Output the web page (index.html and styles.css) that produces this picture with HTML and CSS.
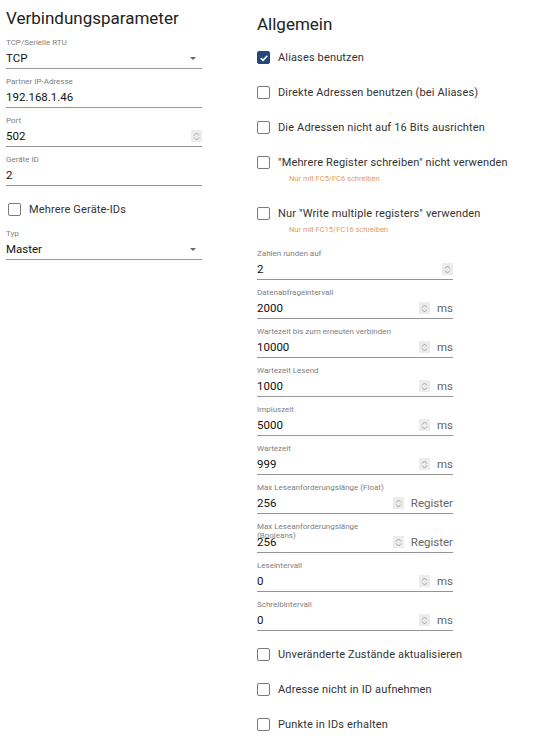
FILE: index.html
```html
<!DOCTYPE html>
<html lang="de">
<head>
    <meta charset="UTF-8">
    <meta name="viewport" content="width=device-width, initial-scale=1.0">
    <title>Modbus Einstellungen</title>
    <link rel="stylesheet" href="styles.css">
</head>
<body>
    <div class="page">
        <div class="column column-left">
            <h2 class="title">Verbindungsparameter</h2>

            <div class="field">
                <div class="label">TCP/Serielle RTU</div>
                <div class="input-row">
                    <span class="value">TCP</span>
                    <span class="arrow"></span>
                </div>
            </div>
            <div class="field">
                <div class="label">Partner IP-Adresse</div>
                <div class="input-row">
                    <span class="value">192.168.1.46</span>
                </div>
            </div>
            <div class="field">
                <div class="label">Port</div>
                <div class="input-row">
                    <span class="value">502</span>
                    <span class="spinner"><svg width="7" height="9" viewBox="0 0 7 9"><path d="M1 3.5 L3.5 1 L6 3.5 M1 5.5 L3.5 8 L6 5.5" fill="none" stroke="#9a9a9a" stroke-width="0.9"/></svg></span>
                </div>
            </div>
            <div class="field">
                <div class="label">Geräte ID</div>
                <div class="input-row">
                    <span class="value">2</span>
                </div>
            </div>

            <label class="check check-left">
                <span class="box"></span>
                <span class="check-text">Mehrere Geräte-IDs</span>
            </label>

            <div class="field">
                <div class="label">Typ</div>
                <div class="input-row">
                    <span class="value">Master</span>
                    <span class="arrow"></span>
                </div>
            </div>
        </div>

        <div class="column column-right">
            <h2 class="title title-right">Allgemein</h2>

            <label class="check">
                <span class="box checked"><svg width="10" height="10" viewBox="0 0 10 10"><path d="M1.8 5.2 L4 7.3 L8.3 2.8" fill="none" stroke="#fff" stroke-width="1.6"/></svg></span>
                <span class="check-text">Aliases benutzen</span>
            </label>
            <label class="check">
                <span class="box"></span>
                <span class="check-text">Direkte Adressen benutzen (bei Aliases)</span>
            </label>
            <label class="check">
                <span class="box"></span>
                <span class="check-text">Die Adressen nicht auf 16 Bits ausrichten</span>
            </label>
            <div class="check-group">
                <label class="check">
                    <span class="box"></span>
                    <span class="check-text">"Mehrere Register schreiben" nicht verwenden</span>
                </label>
                <div class="helper">Nur mit FC5/FC6 schreiben</div>
            </div>
            <div class="check-group">
                <label class="check">
                    <span class="box"></span>
                    <span class="check-text">Nur "Write multiple registers" verwenden</span>
                </label>
                <div class="helper">Nur mit FC15/FC16 schreiben</div>
            </div>

            <div class="field">
                <div class="label">Zahlen runden auf</div>
                <div class="input-row">
                    <span class="value">2</span>
                    <span class="spinner"><svg width="7" height="9" viewBox="0 0 7 9"><path d="M1 3.5 L3.5 1 L6 3.5 M1 5.5 L3.5 8 L6 5.5" fill="none" stroke="#9a9a9a" stroke-width="0.9"/></svg></span>
                </div>
            </div>
            <div class="field">
                <div class="label">Datenabfrageintervall</div>
                <div class="input-row">
                    <span class="value">2000</span>
                    <span class="spinner"><svg width="7" height="9" viewBox="0 0 7 9"><path d="M1 3.5 L3.5 1 L6 3.5 M1 5.5 L3.5 8 L6 5.5" fill="none" stroke="#9a9a9a" stroke-width="0.9"/></svg></span>
                    <span class="unit">ms</span>
                </div>
            </div>
            <div class="field">
                <div class="label">Wartezeit bis zum erneuten verbinden</div>
                <div class="input-row">
                    <span class="value">10000</span>
                    <span class="spinner"><svg width="7" height="9" viewBox="0 0 7 9"><path d="M1 3.5 L3.5 1 L6 3.5 M1 5.5 L3.5 8 L6 5.5" fill="none" stroke="#9a9a9a" stroke-width="0.9"/></svg></span>
                    <span class="unit">ms</span>
                </div>
            </div>
            <div class="field">
                <div class="label">Wartezeit Lesend</div>
                <div class="input-row">
                    <span class="value">1000</span>
                    <span class="spinner"><svg width="7" height="9" viewBox="0 0 7 9"><path d="M1 3.5 L3.5 1 L6 3.5 M1 5.5 L3.5 8 L6 5.5" fill="none" stroke="#9a9a9a" stroke-width="0.9"/></svg></span>
                    <span class="unit">ms</span>
                </div>
            </div>
            <div class="field">
                <div class="label">Impluszeit</div>
                <div class="input-row">
                    <span class="value">5000</span>
                    <span class="spinner"><svg width="7" height="9" viewBox="0 0 7 9"><path d="M1 3.5 L3.5 1 L6 3.5 M1 5.5 L3.5 8 L6 5.5" fill="none" stroke="#9a9a9a" stroke-width="0.9"/></svg></span>
                    <span class="unit">ms</span>
                </div>
            </div>
            <div class="field">
                <div class="label">Wartezeit</div>
                <div class="input-row">
                    <span class="value">999</span>
                    <span class="spinner"><svg width="7" height="9" viewBox="0 0 7 9"><path d="M1 3.5 L3.5 1 L6 3.5 M1 5.5 L3.5 8 L6 5.5" fill="none" stroke="#9a9a9a" stroke-width="0.9"/></svg></span>
                    <span class="unit">ms</span>
                </div>
            </div>
            <div class="field field-register">
                <div class="label">Max Leseanforderungslänge (Float)</div>
                <div class="input-row">
                    <span class="value">256</span>
                    <span class="spinner"><svg width="7" height="9" viewBox="0 0 7 9"><path d="M1 3.5 L3.5 1 L6 3.5 M1 5.5 L3.5 8 L6 5.5" fill="none" stroke="#9a9a9a" stroke-width="0.9"/></svg></span>
                    <span class="unit">Register</span>
                </div>
            </div>
            <div class="field field-register">
                <div class="label">Max Leseanforderungslänge (Booleans)</div>
                <div class="input-row">
                    <span class="value">256</span>
                    <span class="spinner"><svg width="7" height="9" viewBox="0 0 7 9"><path d="M1 3.5 L3.5 1 L6 3.5 M1 5.5 L3.5 8 L6 5.5" fill="none" stroke="#9a9a9a" stroke-width="0.9"/></svg></span>
                    <span class="unit">Register</span>
                </div>
            </div>
            <div class="field">
                <div class="label">Leseintervall</div>
                <div class="input-row">
                    <span class="value">0</span>
                    <span class="spinner"><svg width="7" height="9" viewBox="0 0 7 9"><path d="M1 3.5 L3.5 1 L6 3.5 M1 5.5 L3.5 8 L6 5.5" fill="none" stroke="#9a9a9a" stroke-width="0.9"/></svg></span>
                    <span class="unit">ms</span>
                </div>
            </div>
            <div class="field">
                <div class="label">Schreibintervall</div>
                <div class="input-row">
                    <span class="value">0</span>
                    <span class="spinner"><svg width="7" height="9" viewBox="0 0 7 9"><path d="M1 3.5 L3.5 1 L6 3.5 M1 5.5 L3.5 8 L6 5.5" fill="none" stroke="#9a9a9a" stroke-width="0.9"/></svg></span>
                    <span class="unit">ms</span>
                </div>
            </div>

            <label class="check">
                <span class="box"></span>
                <span class="check-text">Unveränderte Zustände aktualisieren</span>
            </label>
            <label class="check">
                <span class="box"></span>
                <span class="check-text">Adresse nicht in ID aufnehmen</span>
            </label>
            <label class="check">
                <span class="box"></span>
                <span class="check-text">Punkte in IDs erhalten</span>
            </label>
        </div>
    </div>
</body>
</html>
```

FILE: styles.css
```css
body {
    font-family: Roboto, "Liberation Sans", Arial, sans-serif;
    margin: 0;
    padding: 0 0 0 6px;
    background-color: #fff;
    color: #222;
}

.page {
    display: flex;
    gap: 55px;
}

.column {
    width: 196px;
    display: flex;
    flex-direction: column;
}

.title {
    font-size: 17px;
    font-weight: 400;
    line-height: 24px;
    margin: 6px 0 6px;
    color: #222;
}

.title-right {
    margin: 12px 0 4px;
}

.field {
    margin-bottom: 6px;
}

.label {
    height: 12px;
    padding-top: 1.5px;
    box-sizing: border-box;
    font-size: 8px;
    line-height: 9px;
    color: #808080;
    white-space: nowrap;
}

.field-register .label {
    white-space: normal;
    width: 135px;
}

.input-row {
    display: flex;
    align-items: center;
    height: 20px;
    border-bottom: 1px solid #949494;
}

.value {
    flex: 1;
    font-size: 11.5px;
    color: #111;
}

.arrow {
    width: 0;
    height: 0;
    border-left: 3.5px solid transparent;
    border-right: 3.5px solid transparent;
    border-top: 3.5px solid #666;
    margin-right: 6px;
}

.spinner {
    width: 11px;
    height: 12px;
    background-color: #ececec;
    display: flex;
    align-items: center;
    justify-content: center;
}

.unit {
    font-size: 11.5px;
    color: #666;
    margin-left: 7px;
}

.check {
    display: flex;
    align-items: center;
    height: 13px;
    padding: 11px 0;
    font-size: 11px;
    letter-spacing: 0.15px;
    color: #333;
    white-space: nowrap;
}

.check-left {
    padding-left: 2px;
}

.box {
    flex-shrink: 0;
    width: 13px;
    height: 13px;
    box-sizing: border-box;
    border: 1.5px solid #7a7a7a;
    border-radius: 2px;
    margin-right: 8px;
    display: flex;
    align-items: center;
    justify-content: center;
}

.box.checked {
    background-color: #25467a;
    border-color: #25467a;
}

.check-group {
    padding-bottom: 11px;
}

.check-group .check {
    padding-bottom: 0;
}

.helper {
    margin-top: 4px;
    padding-left: 32px;
    font-size: 7.5px;
    line-height: 12px;
    color: #e39a5c;
}
```
